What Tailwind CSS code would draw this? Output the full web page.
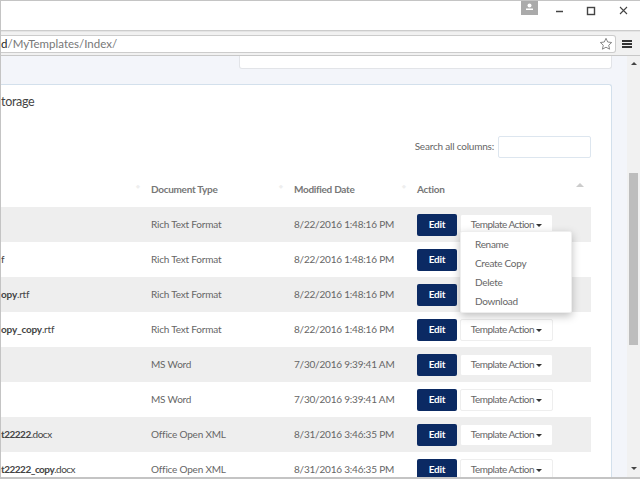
<!DOCTYPE html>
<html lang="en">
<head>
    <meta charset="UTF-8">
    <title>My Templates</title>
    <script src="https://cdn.jsdelivr.net/npm/@tailwindcss/browser@4"></script>
</head>
<body class="bg-white font-['Lato',sans-serif] text-[#666]">
<div class="w-[640px] h-[479px] flex flex-col overflow-hidden border-l border-t border-[#c4c4c4] border-b-2">
    <!-- Title bar -->
    <div class="h-[30px] shrink-0 flex justify-end bg-white border-b border-[#ccc]">
        <div class="w-[17px] h-[14px] bg-[#aaa] mr-[102px] flex justify-center items-start">
            <svg width="9" height="8" viewBox="0 0 9 8" class="mt-[2px]"><circle cx="4.5" cy="2.5" r="2" fill="#fff"/><path d="M1 7h7V5.5H1z" fill="#fff"/></svg>
        </div>
        <svg width="120" height="30" viewBox="0 0 120 30" class="absolute left-[520px] top-0" fill="none" stroke="#444">
            <path d="M36 11.5h7" stroke-width="1.5"/>
            <rect x="67.5" y="7.5" width="7" height="7" stroke-width="1.4"/>
            <path d="M100 7l7 7M107 7l-7 7" stroke-width="1.1"/>
        </svg>
    </div>
    <!-- Address bar -->
    <div class="h-[25px] shrink-0 bg-[#f1f1f1] border-b border-[#c8c8c8] border-t border-t-[#e4e4e4] flex items-center">
        <div class="flex-1 h-[18px] bg-white border-y border-r border-[#ccc] rounded-r-[3px] flex items-center justify-between pr-[2px] text-[11.5px] text-[#777]">
            <span><span class="text-[#222]">d</span>/MyTemplates/Index/</span>
            <svg width="14" height="14" viewBox="0 0 14 14" fill="none" stroke="#888"><path d="M7 1.3l1.7 3.7 4 .5-3 2.7.9 4L7 10.2l-3.6 2 .9-4-3-2.7 4-.5z"/></svg>
        </div>
        <div class="w-[24px] pr-[3px] flex flex-col items-center gap-[1px] shrink-0">
            <div class="w-[10px] h-[2px] bg-[#333]"></div>
            <div class="w-[10px] h-[2px] bg-[#333]"></div>
            <div class="w-[10px] h-[2px] bg-[#333]"></div>
        </div>
    </div>
    <!-- Page -->
    <div class="flex-1 flex min-h-0">
        <div class="flex-1 bg-[#f3f5fa] pr-[15px] min-w-0">
            <div class="h-[13px] ml-[238px] bg-white border border-t-0 border-[#e2e4e8] rounded-b-[3px]"></div>
            <div class="mt-[15px] h-[400px] bg-white border-t border-r border-[#d3e0ec] rounded-tr-[3px] pr-[20px]">
                <div class="text-[12.5px] tracking-[-0.3px] text-[#444] leading-[18px] pt-[8px]">torage</div>
                <div class="flex justify-end items-center gap-[4px] mt-[25px] text-[10px] tracking-[-0.2px]">
                    <span class="-mt-[2px]">Search all columns:</span>
                    <input type="text" class="w-[93px] h-[22px] bg-white border border-[#dde6ef] rounded-[2px]">
                </div>
                <table class="w-full table-fixed border-collapse text-[10px] tracking-[-0.2px] mt-[14px]">
                    <thead>
                        <tr class="h-[35px] font-bold text-left text-[#777] tracking-[-0.3px]">
                            <th class="w-[150px] font-bold relative"><span class="absolute right-[11px] top-[11px] text-[5px] text-[#eee]">◆</span></th>
                            <th class="w-[143px] font-bold relative">Document Type<span class="absolute right-[11px] top-[11px] text-[5px] text-[#eee]">◆</span></th>
                            <th class="w-[123px] font-bold relative">Modified Date<span class="absolute right-[11px] top-[11px] text-[5px] text-[#eee]">◆</span></th>
                            <th class="font-bold relative">Action<span class="absolute right-[7px] top-[11px] w-0 h-0 border-x-[4px] border-x-transparent border-b-[4px] border-b-[#ccc]"></span></th>
                        </tr>
                    </thead>
                    <tbody>
                        <tr class="h-[35px] bg-[#eee]">
                            <td></td><td>Rich Text Format</td><td>8/22/2016 1:48:16 PM</td>
                            <td class="relative">
                                <div class="flex gap-[3px]">
                                    <button class="w-[40px] h-[22px] bg-[#0b2a63] rounded-[2px] text-white font-bold">Edit</button>
                                    <button class="w-[93px] h-[22px] bg-white border border-[#eee] rounded-[2px] tracking-[-0.5px]">Template Action <span class="inline-block align-middle w-0 h-0 border-x-[3px] border-x-transparent border-t-[3px] border-t-[#333]"></span></button>
                                </div>
                                <div class="absolute left-[43px] top-[24px] z-10 w-[112px] h-[82px] py-[3px] bg-white rounded-[2px] border border-[#eee] shadow-[0_3px_8px_rgba(0,0,0,0.25)] text-left tracking-[-0.3px]">
                                    <div class="h-[19px] leading-[19px] pl-[14px]">Rename</div>
                                    <div class="h-[19px] leading-[19px] pl-[14px]">Create Copy</div>
                                    <div class="h-[19px] leading-[19px] pl-[14px]">Delete</div>
                                    <div class="h-[19px] leading-[19px] pl-[14px]">Download</div>
                                </div>
                            </td>
                        </tr>
                        <tr class="h-[35px]">
                            <td class="text-[#444]">f</td><td>Rich Text Format</td><td>8/22/2016 1:48:16 PM</td>
                            <td><div class="flex gap-[3px]"><button class="w-[40px] h-[22px] bg-[#0b2a63] rounded-[2px] text-white font-bold">Edit</button><button class="w-[93px] h-[22px] bg-white border border-[#eee] rounded-[2px] tracking-[-0.5px]">Template Action <span class="inline-block align-middle w-0 h-0 border-x-[3px] border-x-transparent border-t-[3px] border-t-[#333]"></span></button></div></td>
                        </tr>
                        <tr class="h-[35px] bg-[#eee]">
                            <td class="text-[#444]"><b>opy</b>.rtf</td><td>Rich Text Format</td><td>8/22/2016 1:48:16 PM</td>
                            <td><div class="flex gap-[3px]"><button class="w-[40px] h-[22px] bg-[#0b2a63] rounded-[2px] text-white font-bold">Edit</button><button class="w-[93px] h-[22px] bg-white border border-[#eee] rounded-[2px] tracking-[-0.5px]">Template Action <span class="inline-block align-middle w-0 h-0 border-x-[3px] border-x-transparent border-t-[3px] border-t-[#333]"></span></button></div></td>
                        </tr>
                        <tr class="h-[35px]">
                            <td class="text-[#444]"><b>opy_copy</b>.rtf</td><td>Rich Text Format</td><td>8/22/2016 1:48:16 PM</td>
                            <td><div class="flex gap-[3px]"><button class="w-[40px] h-[22px] bg-[#0b2a63] rounded-[2px] text-white font-bold">Edit</button><button class="w-[93px] h-[22px] bg-white border border-[#eee] rounded-[2px] tracking-[-0.5px]">Template Action <span class="inline-block align-middle w-0 h-0 border-x-[3px] border-x-transparent border-t-[3px] border-t-[#333]"></span></button></div></td>
                        </tr>
                        <tr class="h-[35px] bg-[#eee]">
                            <td></td><td>MS Word</td><td>7/30/2016 9:39:41 AM</td>
                            <td><div class="flex gap-[3px]"><button class="w-[40px] h-[22px] bg-[#0b2a63] rounded-[2px] text-white font-bold">Edit</button><button class="w-[93px] h-[22px] bg-white border border-[#eee] rounded-[2px] tracking-[-0.5px]">Template Action <span class="inline-block align-middle w-0 h-0 border-x-[3px] border-x-transparent border-t-[3px] border-t-[#333]"></span></button></div></td>
                        </tr>
                        <tr class="h-[35px]">
                            <td></td><td>MS Word</td><td>7/30/2016 9:39:41 AM</td>
                            <td><div class="flex gap-[3px]"><button class="w-[40px] h-[22px] bg-[#0b2a63] rounded-[2px] text-white font-bold">Edit</button><button class="w-[93px] h-[22px] bg-white border border-[#eee] rounded-[2px] tracking-[-0.5px]">Template Action <span class="inline-block align-middle w-0 h-0 border-x-[3px] border-x-transparent border-t-[3px] border-t-[#333]"></span></button></div></td>
                        </tr>
                        <tr class="h-[35px] bg-[#eee]">
                            <td class="text-[#444] tracking-[-0.5px]"><b>t22222</b>.docx</td><td>Office Open XML</td><td>8/31/2016 3:46:35 PM</td>
                            <td><div class="flex gap-[3px]"><button class="w-[40px] h-[22px] bg-[#0b2a63] rounded-[2px] text-white font-bold">Edit</button><button class="w-[93px] h-[22px] bg-white border border-[#eee] rounded-[2px] tracking-[-0.5px]">Template Action <span class="inline-block align-middle w-0 h-0 border-x-[3px] border-x-transparent border-t-[3px] border-t-[#333]"></span></button></div></td>
                        </tr>
                        <tr class="h-[35px]">
                            <td class="text-[#444] tracking-[-0.5px]"><b>t22222_copy</b>.docx</td><td>Office Open XML</td><td>8/31/2016 3:46:35 PM</td>
                            <td><div class="flex gap-[3px]"><button class="w-[40px] h-[22px] bg-[#0b2a63] rounded-[2px] text-white font-bold">Edit</button><button class="w-[93px] h-[22px] bg-white border border-[#eee] rounded-[2px] tracking-[-0.5px]">Template Action <span class="inline-block align-middle w-0 h-0 border-x-[3px] border-x-transparent border-t-[3px] border-t-[#333]"></span></button></div></td>
                        </tr>
                    </tbody>
                </table>
            </div>
        </div>
        <!-- Scrollbar -->
        <div class="w-[13px] shrink-0 bg-[#f1f1f1] flex flex-col items-center relative">
            <div class="mt-[6px] w-0 h-0 border-x-[3px] border-x-transparent border-b-[3px] border-b-[#444]"></div>
            <div class="mt-[108px] w-[9px] h-[172px] bg-[#bdbdbd]"></div>
            <div class="mt-[122px] w-0 h-0 border-x-[3px] border-x-transparent border-t-[3px] border-t-[#444]"></div>
        </div>
    </div>
</div>
</body>
</html>
